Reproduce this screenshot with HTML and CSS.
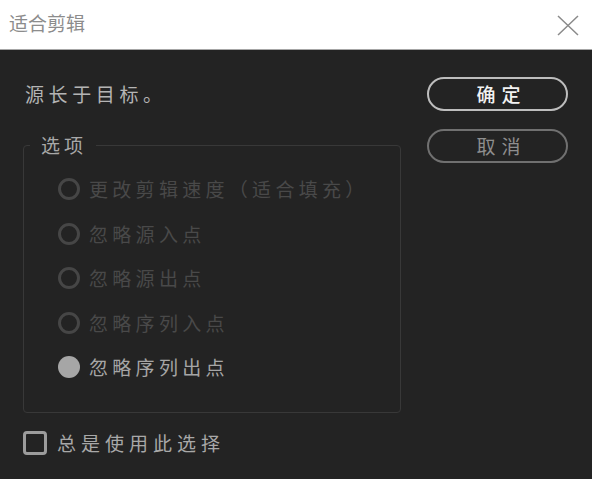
FILE: index.html
```html
<!DOCTYPE html>
<html lang="zh-CN">
<head>
<meta charset="utf-8">
<title>适合剪辑</title>
<link rel="stylesheet" href="styles.css">
</head>
<body>
<div class="dialog">
  <header class="titlebar">
    <span class="title">适合剪辑</span>
    <span class="close" aria-label="关闭">
      <svg width="22" height="21" viewBox="0 0 22 21"><path d="M1 1 L21 20 M21 1 L1 20" stroke="#8a8a8a" stroke-width="1.5" fill="none"/></svg>
    </span>
  </header>
  <main class="body">
    <div class="left">
      <p class="message">源长于目标。</p>
      <fieldset class="options">
        <legend class="legend">选项</legend>
        <div class="radio disabled"><span class="dot"></span><span class="label">更改剪辑速度（适合填充）</span></div>
        <div class="radio disabled"><span class="dot"></span><span class="label">忽略源入点</span></div>
        <div class="radio disabled"><span class="dot"></span><span class="label">忽略源出点</span></div>
        <div class="radio disabled"><span class="dot"></span><span class="label">忽略序列入点</span></div>
        <div class="radio checked"><span class="dot"></span><span class="label">忽略序列出点</span></div>
      </fieldset>
      <div class="check"><span class="box"></span><span class="label">总是使用此选择</span></div>
    </div>
    <div class="right">
      <button class="btn primary">确定</button>
      <button class="btn secondary">取消</button>
    </div>
  </main>
</div>
</body>
</html>
```

FILE: styles.css
```css
* { box-sizing: border-box; }
html, body { margin: 0; padding: 0; }
body {
  width: 592px;
  height: 479px;
  overflow: hidden;
  font-family: "Noto Sans CJK SC", "Noto Sans", sans-serif;
  background: #232323;
}
.dialog { width: 592px; height: 479px; display: flex; flex-direction: column; }
.titlebar {
  height: 50px;
  background: #ffffff;
  border-bottom: 1px solid #a6a6a6;
  display: flex;
  align-items: center;
  justify-content: space-between;
  padding: 0 13px 3px 9px;
  flex: none;
}
.title { font-size: 19px; line-height: 24px; color: #8c8c8c; }
.close { display: flex; width: 22px; height: 21px; margin-top: 4px; }
.body {
  flex: 1;
  background: #232323;
  display: flex;
  padding: 0 24px 0 23px;
}
.left { width: 378px; padding-top: 32px; }
.message {
  margin: 0;
  font-size: 19px;
  line-height: 24px;
  letter-spacing: 4.6px;
  color: #b4b4b4;
  padding-left: 2px;
}
.options {
  margin: 27px 0 0 0;
  padding: 10px 0 22px 6px;
  border: 1px solid #383838;
  border-radius: 4px;
  min-width: 0;
}
.legend {
  padding: 0 9px 0 11px;
  font-size: 19px;
  line-height: 24px;
  letter-spacing: 4px;
  color: #a8a8a8;
}
.radio {
  height: 44.5px;
  margin-left: 28px;
  display: flex;
  align-items: center;
  gap: 9px;
}
.dot {
  width: 22px;
  height: 22px;
  border-radius: 50%;
  flex: none;
}
.label {
  font-size: 19px;
  line-height: 24px;
  letter-spacing: 4.3px;
  white-space: nowrap;
}
.radio.disabled .dot { border: 3px solid #464646; }
.radio.disabled .label { color: #494949; }
.radio.checked .dot { background: #a6a6a6; }
.radio.checked .label { color: #a6a6a6; }
.check {
  margin-top: 18px;
  display: flex;
  align-items: center;
  gap: 10px;
}
.box {
  width: 24px;
  height: 24px;
  border: 3px solid #9c9c9c;
  border-radius: 4px;
  flex: none;
}
.check .label { color: #a8a8a8; letter-spacing: 5px; }
.right {
  margin-left: auto;
  padding-top: 27px;
  display: flex;
  flex-direction: column;
  gap: 18px;
}
.btn {
  width: 141px;
  height: 34px;
  border-radius: 17px;
  background: transparent;
  font-family: "Noto Sans CJK SC", "Noto Sans", sans-serif;
  font-size: 19px;
  line-height: 24px;
  letter-spacing: 6px;
  padding: 0 0 0 8px;
  cursor: pointer;
}
.btn.primary { border: 2px solid #bdbdbd; color: #f2f2f2; font-weight: 500; }
.btn.secondary { border: 2px solid #707070; color: #8e8e8e; }
```
